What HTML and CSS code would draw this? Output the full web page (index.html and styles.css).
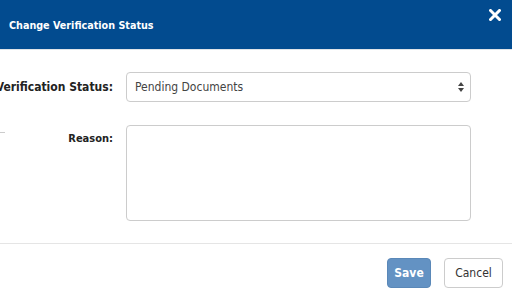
FILE: index.html
```html
<!DOCTYPE html>
<html lang="en">
<head>
    <meta charset="UTF-8">
    <title>Change Verification Status</title>
    <link rel="stylesheet" href="styles.css">
</head>
<body>

    <div class="modal">
        <!-- header -->
        <div class="modal-header">
            <span class="modal-title">Change Verification Status</span>
            <span class="close">
                <svg width="12" height="12" viewBox="0 0 12 12">
                    <path d="M1.5 1.5 L10.5 10.5 M10.5 1.5 L1.5 10.5" stroke="#fff" stroke-width="3" stroke-linecap="square"/>
                </svg>
            </span>
        </div>

        <!-- form -->
        <div class="modal-body">
            <div class="row">
                <label class="row-label">Verification Status:</label>
                <div class="select">
                    <span>Pending Documents</span>
                    <svg width="6" height="10" viewBox="0 0 6 10">
                        <path d="M0 4 L3 0 L6 4 Z M0 6 L3 10 L6 6 Z" fill="#444"/>
                    </svg>
                </div>
            </div>
            <div class="row">
                <label class="row-label top">Reason:</label>
                <textarea class="reason"></textarea>
            </div>
            <div class="tick"></div>
        </div>

        <!-- footer -->
        <div class="modal-footer">
            <button class="btn btn-save">Save</button>
            <button class="btn btn-cancel">Cancel</button>
        </div>
    </div>

</body>
</html>
```

FILE: styles.css
```css
body { margin: 0; font-family: "DejaVu Sans Condensed", "DejaVu Sans", sans-serif; font-size: 12px; color: #333; background: #fff; }
.modal { width: 512px; height: 294px; overflow: hidden; }
.modal-header { height: 50px; background: #024b8f; border-bottom: 1px solid #dfe3e8; display: flex; align-items: center; justify-content: space-between; padding: 0 11px 0 9px; box-sizing: border-box; }
.modal-title { color: #fff; font-weight: bold; font-size: 10.7px; margin-top: 1px; }
.close { display: flex; margin-top: -20px; }
.modal-body { position: relative; padding: 22px 0 22px 0; border-bottom: 1px solid #e5e5e5; display: flex; flex-direction: column; gap: 23px; }
.row { display: flex; gap: 13px; align-items: center; }
.row-label { width: 113px; flex: none; display: flex; justify-content: flex-end; white-space: nowrap; font-weight: bold; color: #222; font-size: 12px; }
.row-label.top { align-self: flex-start; padding-top: 7px; font-size: 11px; }
.select { width: 345px; height: 30px; box-sizing: border-box; border: 1px solid #ccc; border-radius: 4px; display: flex; align-items: center; justify-content: space-between; padding: 0 6px 0 8px; font-size: 12px; color: #444; }
.reason { width: 345px; height: 96px; box-sizing: border-box; border: 1px solid #ccc; border-radius: 4px; resize: none; margin: 0; }
.tick { position: absolute; left: 0; top: 82px; width: 5px; height: 1px; background: #ccc; }
.modal-footer { display: flex; justify-content: flex-end; gap: 13px; padding: 14px 9px 0 0; }
.btn { height: 30px; font-family: inherit; font-size: 12px; border-radius: 4px; padding: 0; }
.btn-save { background: #6392c3; border: 1px solid #5a88b8; color: #fff; font-weight: bold; width: 44px; }
.btn-cancel { background: #fff; border: 1px solid #ccc; color: #333; width: 59px; }
```
